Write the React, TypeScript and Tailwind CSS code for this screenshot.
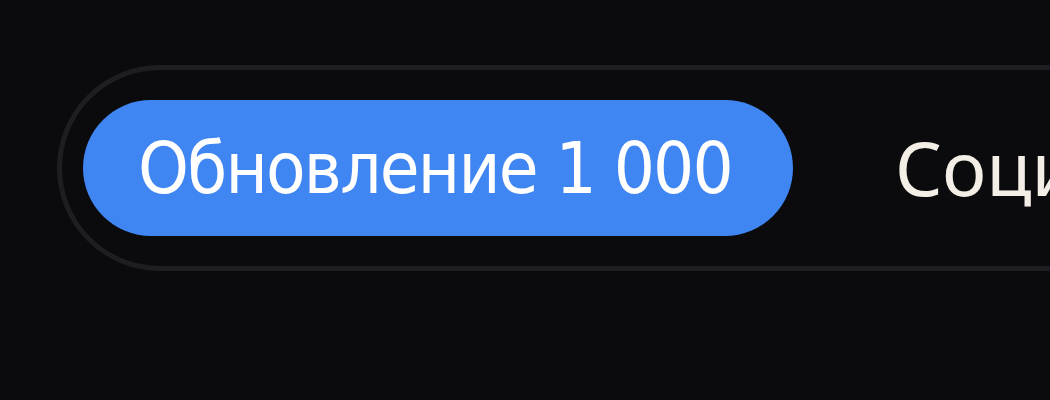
export default function App() {
  return (
    <div className="h-[400px] w-[1050px] overflow-hidden bg-[#0b0b0e] pl-[57px] pt-[65px]">
      <div className="flex w-[1300px] items-center gap-[102px] rounded-full border-[5px] border-[#1e1e22] py-[30px] pl-[21px]">
        <div
          className="flex h-[136px] w-[710px] shrink-0 items-center justify-center whitespace-nowrap rounded-full bg-[#3f86f2] pr-[6px] text-[72px] leading-none tracking-[-1.8px] text-white"
          style={{ fontFamily: '"DejaVu Sans Condensed", "DejaVu Sans", sans-serif' }}
        >
          Обновление 1 000
        </div>
        <div
          className="shrink-0 whitespace-nowrap text-[74px] leading-none text-[#f4efe6]"
          style={{ fontFamily: '"Noto Sans", sans-serif' }}
        >
          Социальные сети
        </div>
      </div>
    </div>
  );
}
